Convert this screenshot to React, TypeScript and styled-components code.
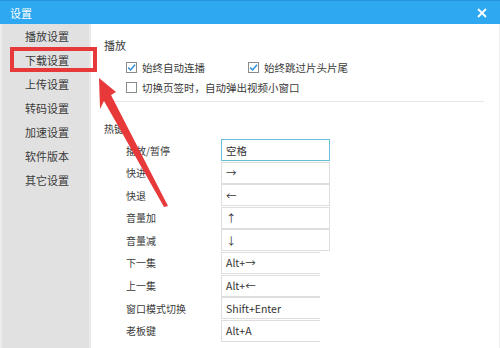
import React from "react";
import styled, { createGlobalStyle } from "styled-components";

const Global = createGlobalStyle`
  html, body { margin: 0; padding: 0; width: 500px; height: 348px; overflow: hidden; background: #fff; }
  body { font-family: "Microsoft YaHei", "Noto Sans CJK SC", "Noto Sans", sans-serif; color: #444; }
  * { box-sizing: border-box; }
`;

const Window = styled.div`
  position: relative;
  width: 500px;
  height: 348px;
  display: flex;
  flex-direction: column;
  background: #fff;
`;

const TitleBar = styled.div`
  height: 24px;
  flex: none;
  background: #2ea9f1;
  border-top: 1px solid #2596dc;
  display: flex;
  align-items: center;
  justify-content: space-between;
  padding: 0 10px 0 10px;
  color: #fff;
  font-size: 11px;
`;

const CloseIcon = styled.svg`
  width: 10px;
  height: 10px;
  margin-right: 3px;
`;

const Body = styled.div`
  flex: 1;
  display: flex;
  min-height: 0;
`;

const Sidebar = styled.nav`
  width: 91px;
  flex: none;
  background: #e1e1e1;
  border-left: 2px solid #ececec;
  border-right: 2px solid #e9e9e9;
  display: flex;
  flex-direction: column;
  padding-top: 0;
`;

const NavItem = styled.div`
  height: 24px;
  line-height: 24px;
  padding-left: 23px;
  font-size: 11px;
  color: #3a3a3a;
  &:first-child { margin-top: 0; height: 24px; }
`;

const Content = styled.main`
  flex: 1;
  padding: 14px 15px 0 13px;
  display: flex;
  flex-direction: column;
  border-right: 1px solid #ededed;
`;

const Heading = styled.div<{ $small?: boolean }>`
  font-size: ${(p) => (p.$small ? "10px" : "11px")};
  line-height: 14px;
  height: 14px;
  color: #3a3a3a;
`;

const CheckGroup = styled.div`
  margin-top: 5px;
  padding-left: 22px;
  display: flex;
  flex-direction: column;
`;

const CheckRow = styled.div`
  height: 20px;
  display: flex;
  align-items: center;
`;

const CheckItem = styled.label<{ $width?: number }>`
  display: flex;
  align-items: center;
  gap: 5px;
  font-size: 10.5px;
  color: #3a3a3a;
  width: ${(p) => (p.$width ? `${p.$width}px` : "auto")};
`;

const Box = styled.span`
  width: 11px;
  height: 11px;
  border: 1px solid #8a8a8a;
  background: #fff;
  display: flex;
  align-items: center;
  justify-content: center;
`;

const Separator = styled.div`
  height: 1px;
  background: #e6e6e6;
  margin-top: 4px;
  margin-right: 0;
`;

const HotkeySection = styled.div`
  margin-top: 20px;
  display: flex;
  flex-direction: column;
`;

const HotkeyList = styled.div`
  margin-top: 3px;
  padding-left: 22px;
  display: flex;
  flex-direction: column;
  gap: 0.6px;
`;

const HotkeyRow = styled.div`
  display: flex;
  align-items: center;
  height: 22px;
`;

const HotkeyLabel = styled.div`
  width: 95px;
  font-size: 10px;
  color: #3a3a3a;
`;

const KeyInput = styled.div<{ $active?: boolean; $clipped?: boolean }>`
  width: ${(p) => (p.$clipped ? "99px" : "109px")};
  height: 22px;
  border: 1px solid ${(p) => (p.$active ? "#66bfd9" : "#dedede")};
  border-right: ${(p) => (p.$clipped ? "none" : undefined)};
  padding-left: 4px;
  display: flex;
  align-items: center;
  font-size: 10.5px;
  color: #333;
  font-family: "Segoe UI", "Noto Sans CJK SC", "Noto Sans", sans-serif;
`;

const Overlay = styled.svg`
  position: absolute;
  left: 0;
  top: 0;
  width: 500px;
  height: 348px;
  pointer-events: none;
`;

const navItems = ["播放设置", "下载设置", "上传设置", "转码设置", "加速设置", "软件版本", "其它设置"];

const hotkeys: { label: string; key: string; active?: boolean; clipped?: boolean }[] = [
  { label: "播放/暂停", key: "空格", active: true },
  { label: "快进", key: "→" },
  { label: "快退", key: "←" },
  { label: "音量加", key: "↑" },
  { label: "音量减", key: "↓" },
  { label: "下一集", key: "Alt+→", clipped: true },
  { label: "上一集", key: "Alt+←", clipped: true },
  { label: "窗口模式切换", key: "Shift+Enter", clipped: true },
  { label: "老板键", key: "Alt+A", clipped: true },
];

const CheckBox = ({ checked }: { checked?: boolean }) => (
  <Box>
    {checked && (
      <svg width="9" height="9" viewBox="0 0 9 9">
        <path d="M1.2 4.6 L3.6 7 L8 1.8" fill="none" stroke="#2f8fd8" strokeWidth="1.5" />
      </svg>
    )}
  </Box>
);

export default function App() {
  return (
    <>
      <Global />
      <Window>
        <TitleBar>
          <span>设置</span>
          <CloseIcon viewBox="0 0 10 10">
            <path d="M1 1 L9 9 M9 1 L1 9" stroke="#fff" strokeWidth="1.8" />
          </CloseIcon>
        </TitleBar>
        <Body>
          <Sidebar>
            {navItems.map((n) => (
              <NavItem key={n}>{n}</NavItem>
            ))}
          </Sidebar>
          <Content>
            <Heading>播放</Heading>
            <CheckGroup>
              <CheckRow>
                <CheckItem $width={122}>
                  <CheckBox checked />
                  始终自动连播
                </CheckItem>
                <CheckItem>
                  <CheckBox checked />
                  始终跳过片头片尾
                </CheckItem>
              </CheckRow>
              <CheckRow>
                <CheckItem>
                  <CheckBox />
                  切换页签时，自动弹出视频小窗口
                </CheckItem>
              </CheckRow>
            </CheckGroup>
            <Separator />
            <HotkeySection>
              <Heading $small>热键</Heading>
              <HotkeyList>
                {hotkeys.map((h) => (
                  <HotkeyRow key={h.label}>
                    <HotkeyLabel>{h.label}</HotkeyLabel>
                    <KeyInput $active={h.active} $clipped={h.clipped}>
                      {h.key}
                    </KeyInput>
                  </HotkeyRow>
                ))}
              </HotkeyList>
            </HotkeySection>
          </Content>
        </Body>
        <Overlay viewBox="0 0 500 348">
          <rect x="12" y="49" width="83" height="21" fill="none" stroke="#e8393a" strokeWidth="4" />
          <polygon
            points="99,78 116,92 111,95 168,206 164,207 104,101 100,109"
            fill="#e8393a"
          />
        </Overlay>
      </Window>
    </>
  );
}
